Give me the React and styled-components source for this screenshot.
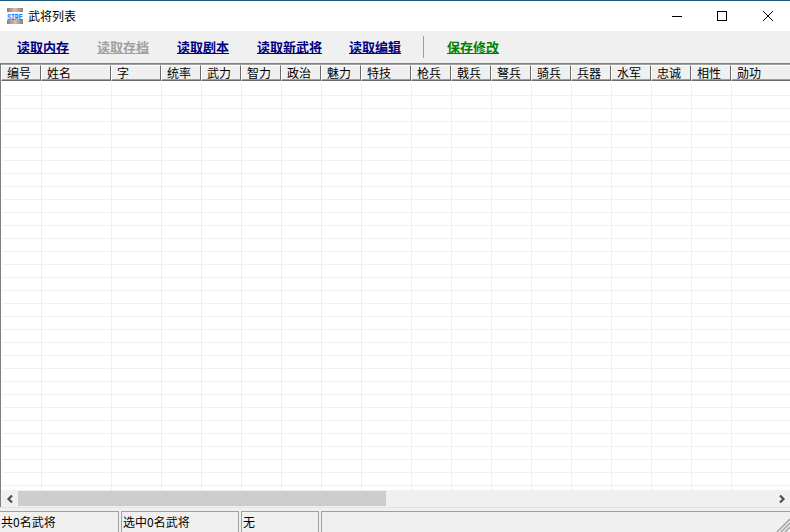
import React from "react";
import styled, { createGlobalStyle } from "styled-components";

const Global = createGlobalStyle`
  html, body { margin: 0; padding: 0; background: #fff; }
  body { font-family: "Noto Sans CJK SC", "Liberation Sans", sans-serif; }
`;
const Win = styled.div`
  width: 790px; height: 532px; display: flex; flex-direction: column; overflow: hidden;
  border-top: 1px solid #1a5c7a; box-sizing: border-box; background: #f0f0f0;
`;
const TitleBar = styled.div`
  height: 30px; background: #fff; display: flex; align-items: center; padding-left: 7px; flex: none;
`;
const TitleText = styled.span`
  font-size: 12px; color: #000; margin-left: 5px; line-height: 30px;
`;
const WinButtons = styled.div`
  margin-left: auto; margin-right: -1px; display: flex; height: 30px;
`;
const WinButton = styled.div`
  width: ${p => p.$w}px; height: 30px; display: flex; align-items: center; justify-content: center;
`;
const ToolBar = styled.div`
  height: 32px; flex: none; display: flex; align-items: center; padding-left: 17px; background: #f0f0f0;
`;
const ToolLink = styled.span`
  font-size: 13px; font-weight: 700; line-height: 32px; text-decoration: underline; white-space: nowrap;
  width: ${p => p.$w}px; color: ${p => p.$c};
`;
const ToolSep = styled.div`
  width: 1px; height: 22px; background: #a0a0a0; margin: 0 23px 0 -2px;
`;
const List = styled.div`
  flex: 1; min-height: 0; display: flex; flex-direction: column; background: #fff;
  border-top: 1px solid #808080; border-left: 1px solid #808080; overflow: hidden;
`;
const HeaderRow = styled.div`
  display: flex; height: 16px; flex: none; background: #f0f0f0; border-top: 1px solid #a0a0a0;
`;
const HeaderCell = styled.div`
  box-sizing: border-box; width: ${p => p.$w}px; flex: none; height: 16px;
  border-top: 1px solid #fff; border-left: 1px solid #fff;
  border-right: 1px solid #696969; border-bottom: 1px solid #696969;
  box-shadow: inset 0 -1px 0 #a0a0a0;
  font-size: 12px; line-height: 13px; color: #000; padding-left: 5px; overflow: hidden; white-space: nowrap;
`;
const Body = styled.div`
  flex: 1; min-height: 0; overflow: hidden; padding: 2px 0 0 1px;
`;
const Row = styled.div`
  display: flex; height: 13px;
`;
const Cell = styled.div`
  box-sizing: border-box; width: ${p => p.$w}px; flex: none; height: 13px;
  border-right: 1px solid #f0f0f0; border-bottom: 1px solid #f0f0f0;
`;
const ScrollBar = styled.div`
  height: 17px; flex: none; display: flex; align-items: center; background: #f0f0f0;
`;
const ScrollArrow = styled.div`
  width: 17px; height: 17px; flex: none; display: flex; align-items: center; justify-content: center;
`;
const ScrollTrack = styled.div`
  flex: 1; height: 17px; display: flex;
`;
const ScrollThumb = styled.div`
  width: 368px; height: 15px; background: #cdcdcd; margin-top: 1px;
`;
const StatusBar = styled.div`
  height: 25px; flex: none; display: flex; gap: 2px; background: #f0f0f0; padding-top: 3px; box-sizing: border-box;
  border-top: 1px solid #e3e3e3; position: relative;
`;
const StatusPane = styled.div`
  box-sizing: border-box; width: ${p => p.$w ? p.$w + "px" : "auto"}; flex: ${p => p.$w ? "none" : 1};
  border-top: 1px solid #a0a0a0; border-left: ${p => p.$first ? "none" : "1px solid #a0a0a0"};
  border-right: ${p => p.$last ? "none" : "1px solid #a0a0a0"};
  font-size: 12px; line-height: 20px; color: #000; padding-left: 1px; white-space: nowrap;
`;
const Grip = styled.svg`
  position: absolute; right: 0; bottom: 0;
`;

const cols = [["编号",40],["姓名",70],["字",50],["统率",40],["武力",40],["智力",40],["政治",40],["魅力",40],["特技",50],["枪兵",40],["戟兵",40],["弩兵",40],["骑兵",40],["兵器",40],["水军",40],["忠诚",40],["相性",40],["勋功",60]];
const rows = Array.from({ length: 32 }, (_, i) => i);

const Logo = () => (
  <svg width="16" height="16" viewBox="0 0 16 16">
    <defs>
      <linearGradient id="band" x1="0" y1="0" x2="1" y2="0">
        <stop offset="0" stopColor="#8c8078" />
        <stop offset=".5" stopColor="#d8bcb0" />
        <stop offset="1" stopColor="#8c8078" />
      </linearGradient>
    </defs>
    <rect x="0" y="0" width="16" height="4" fill="url(#band)" />
    <rect x="0" y="12" width="16" height="4" fill="url(#band)" />
    <rect x="0" y="4" width="16" height="8" fill="#f6f8fc" />
    <text x="0.2" y="7.8" transform="scale(1 1.5)" fontSize="6.4" fontWeight="700" fill="#1a74f0" fontFamily="Liberation Mono, monospace">SIRE</text>
  </svg>
);

export default function App() {
  return (
    <Win>
      <Global />
      <TitleBar>
        <Logo />
        <TitleText>武将列表</TitleText>
        <WinButtons>
          <WinButton $w={44}>
            <svg width="10" height="10" viewBox="0 0 10 10"><path d="M0 5.5H10" stroke="#000" strokeWidth="1" /></svg>
          </WinButton>
          <WinButton $w={46}>
            <svg width="10" height="10" viewBox="0 0 10 10"><rect x=".5" y=".5" width="9" height="9" fill="none" stroke="#000" /></svg>
          </WinButton>
          <WinButton $w={46}>
            <svg width="10" height="10" viewBox="0 0 10 10"><path d="M0 0L10 10M10 0L0 10" stroke="#000" strokeWidth="1" /></svg>
          </WinButton>
        </WinButtons>
      </TitleBar>
      <ToolBar>
        <ToolLink $w={80} $c="#000080">读取内存</ToolLink>
        <ToolLink $w={80} $c="#a0a0a0">读取存档</ToolLink>
        <ToolLink $w={80} $c="#000080">读取剧本</ToolLink>
        <ToolLink $w={92} $c="#000080">读取新武将</ToolLink>
        <ToolLink $w={76} $c="#000080">读取编辑</ToolLink>
        <ToolSep />
        <ToolLink $w={80} $c="#008000">保存修改</ToolLink>
      </ToolBar>
      <List>
        <HeaderRow>
          {cols.map(([t, w]) => <HeaderCell key={t} $w={w}>{t}</HeaderCell>)}
        </HeaderRow>
        <Body>
          {rows.map(r => (
            <Row key={r}>
              {cols.map(([t, w]) => <Cell key={t} $w={w} />)}
            </Row>
          ))}
        </Body>
        <ScrollBar>
          <ScrollArrow>
            <svg width="8" height="8" viewBox="0 0 8 8"><path d="M6 .5L2.5 4L6 7.5" fill="none" stroke="#505050" strokeWidth="2.2" /></svg>
          </ScrollArrow>
          <ScrollTrack><ScrollThumb /></ScrollTrack>
          <ScrollArrow>
            <svg width="8" height="8" viewBox="0 0 8 8"><path d="M2 .5L5.5 4L2 7.5" fill="none" stroke="#505050" strokeWidth="2.2" /></svg>
          </ScrollArrow>
        </ScrollBar>
      </List>
      <StatusBar>
        <StatusPane $first $w={119}>共0名武将</StatusPane>
        <StatusPane $w={118}>选中0名武将</StatusPane>
        <StatusPane $w={78}>无</StatusPane>
        <StatusPane $last />
        <Grip width="14" height="14" viewBox="0 0 14 14">
          <path d="M14 1L1 14M14 5L5 14M14 9L9 14" stroke="#a8a8a8" strokeWidth="1.6" />
        </Grip>
      </StatusBar>
    </Win>
  );
}
